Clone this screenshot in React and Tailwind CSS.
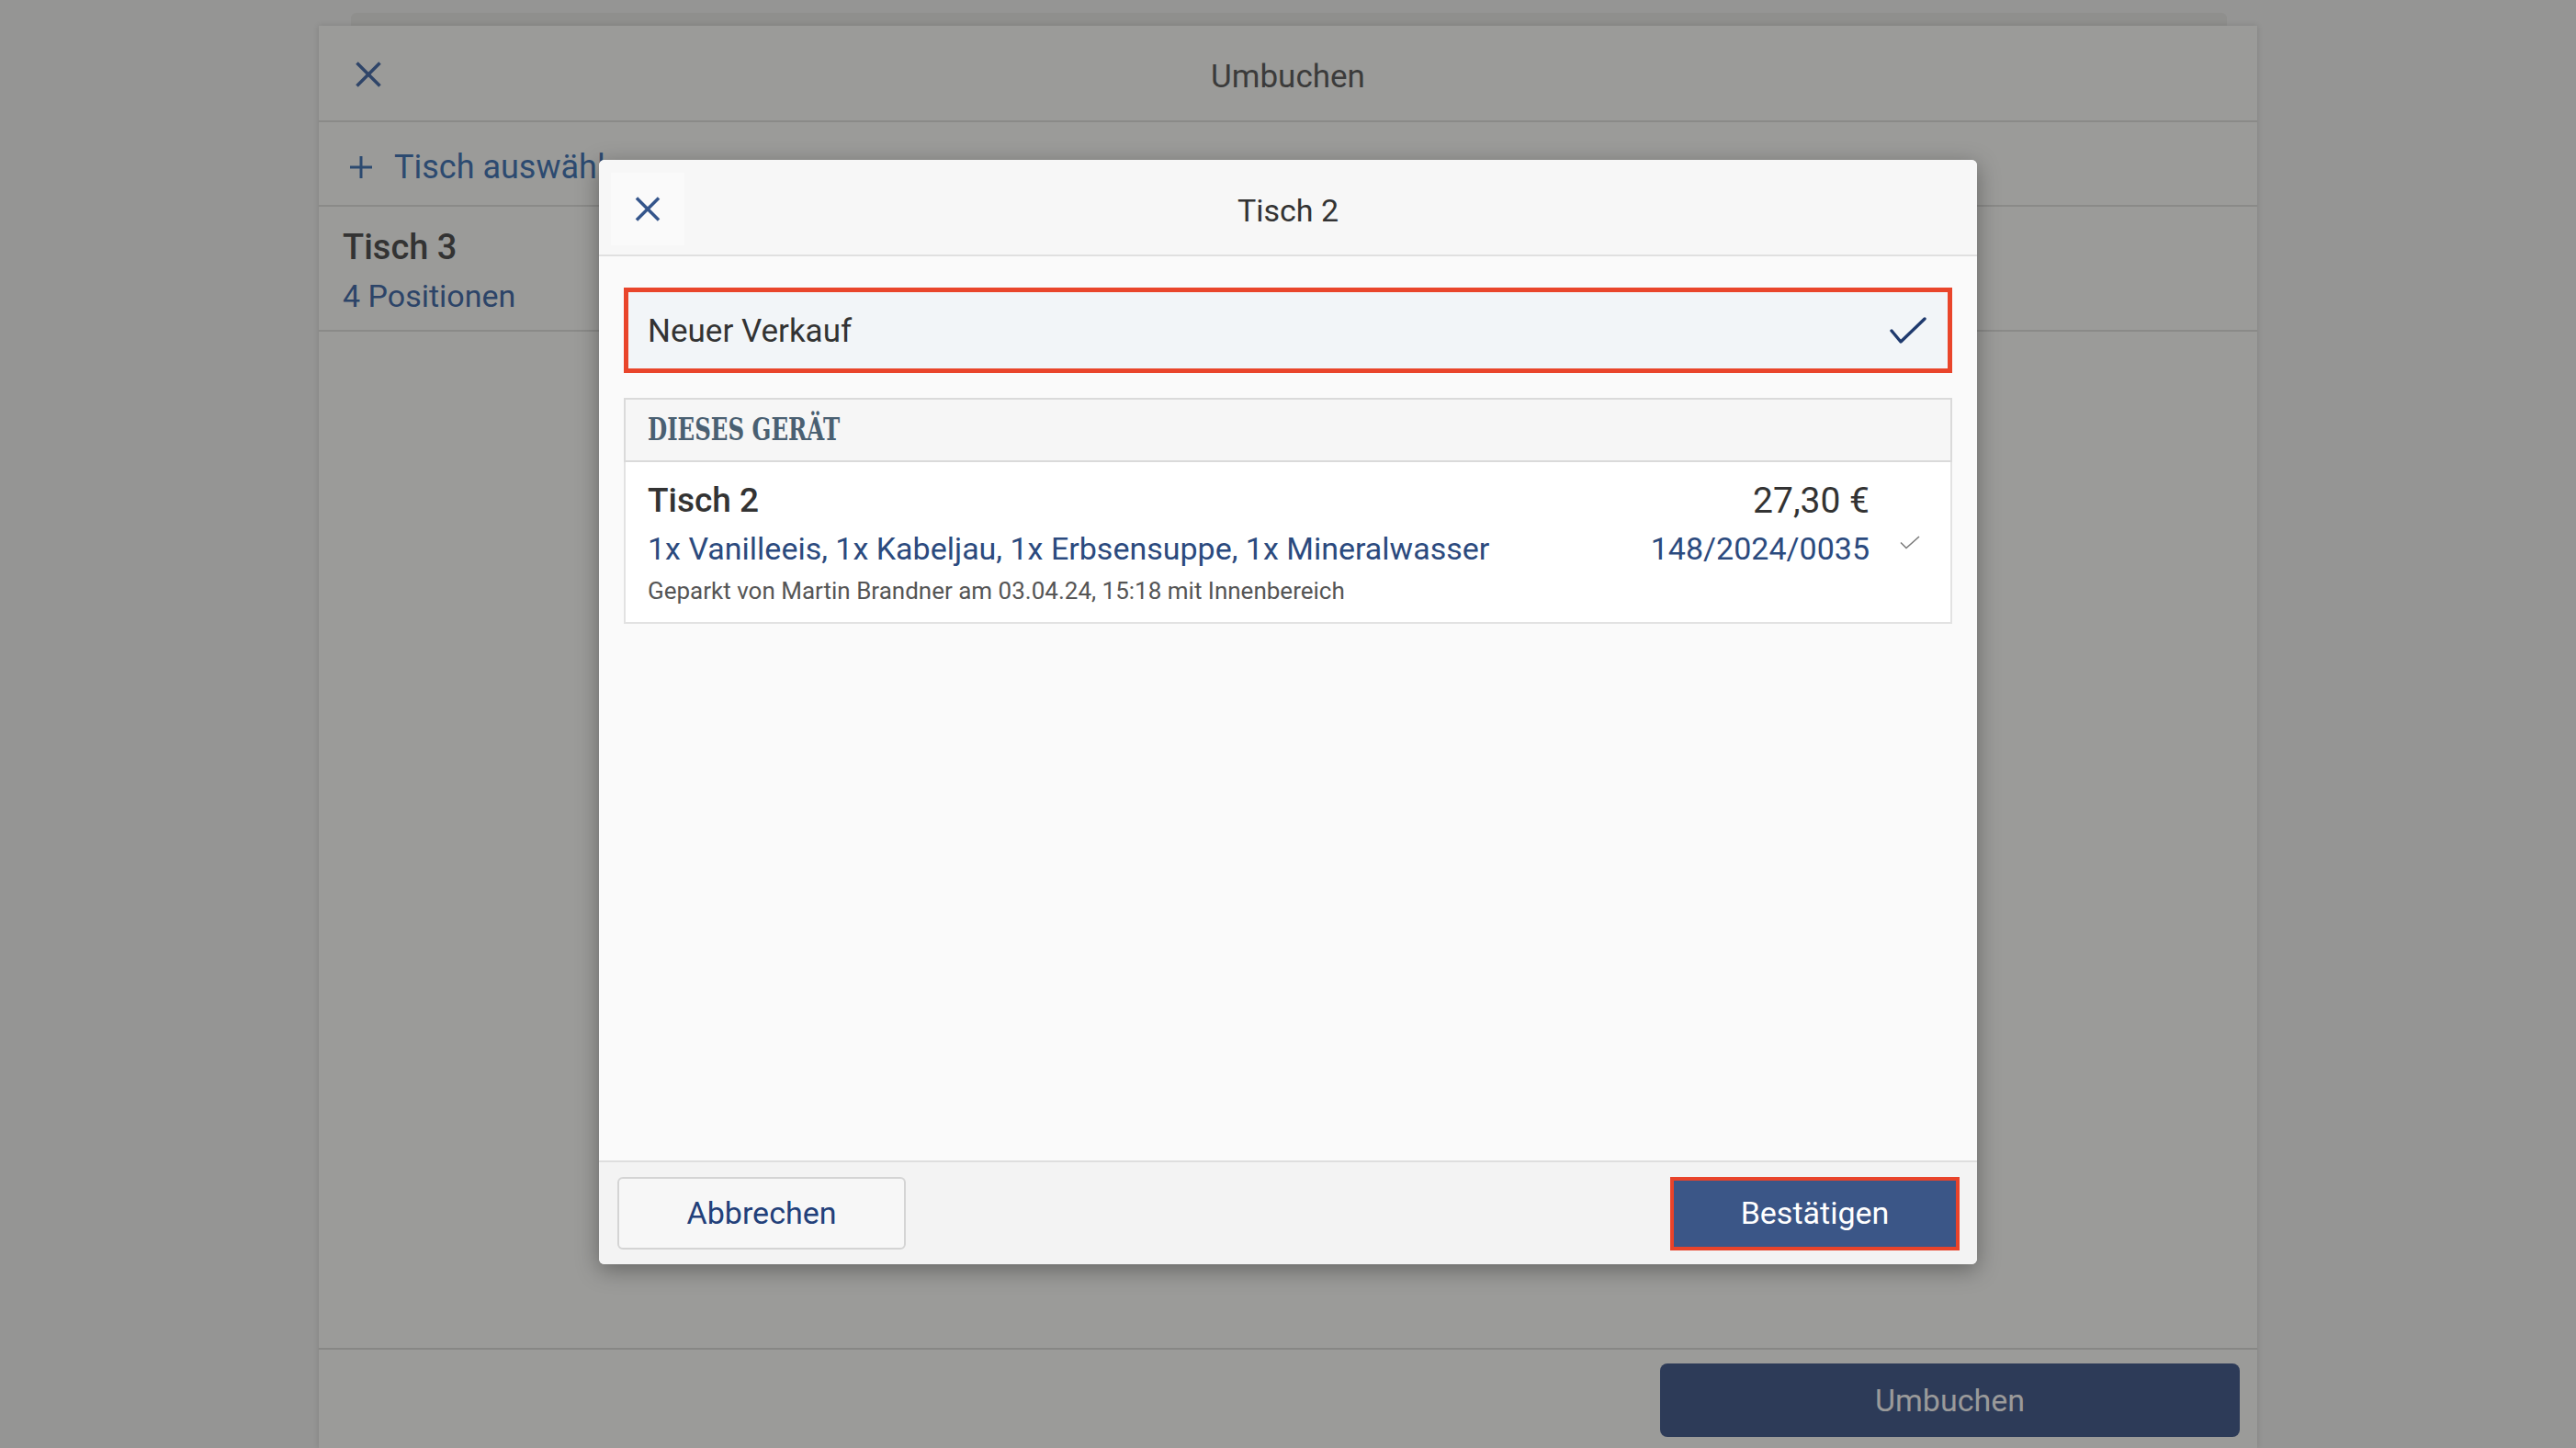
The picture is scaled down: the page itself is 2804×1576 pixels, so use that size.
import React from "react";

function XIcon({ className }) {
  return (
    <svg viewBox="0 0 28 28" className={className} fill="none" stroke="currentColor" strokeWidth="3.6" strokeLinecap="butt">
      <line x1="1.5" y1="1.5" x2="26.5" y2="26.5" />
      <line x1="26.5" y1="1.5" x2="1.5" y2="26.5" />
    </svg>
  );
}

export default function App() {
  return (
    <div
      className="relative h-[1576px] w-[2804px] overflow-hidden bg-[#959594]"
      style={{ fontFamily: "Roboto, 'Noto Sans', sans-serif" }}
    >
      {/* stacked sheet behind */}
      <div className="absolute left-[382px] top-[14px] h-[60px] w-[2042px] rounded-t-[6px] bg-[#8f8f8d]" />

      {/* outer panel */}
      <div className="flex justify-center pt-[28px]">
        <div className="relative flex h-[1548px] w-[2110px] flex-col bg-[#9b9b99] shadow-[0_0_6px_rgba(0,0,0,0.15)]">
          <div className="relative flex h-[105px] shrink-0 items-center justify-center border-b-2 border-[#8a8a88]">
            <div className="absolute left-[14px] top-[0px] flex h-[105px] w-[80px] items-center justify-center text-[#2f4569]">
              <XIcon className="h-[28px] w-[28px]" />
            </div>
            <span className="mt-[10px] text-[35px] text-[#3b3b3b]">Umbuchen</span>
          </div>
          <div className="flex h-[92px] shrink-0 items-center gap-[24px] border-b-2 border-[#8a8a88] pl-[34px] pt-[7px]">
            <svg viewBox="0 0 24 24" className="h-[24px] w-[24px] text-[#2c4a70]" fill="none" stroke="currentColor" strokeWidth="3">
              <line x1="12" y1="0" x2="12" y2="24" />
              <line x1="0" y1="12" x2="24" y2="12" />
            </svg>
            <span className="text-[36px] text-[#2c4a70]">Tisch auswählen</span>
          </div>
          <div className="flex h-[136px] shrink-0 flex-col justify-center border-b-2 border-[#8a8a88] pl-[26px] pt-[5px]">
            <span className="text-[38px] font-medium leading-[46px] text-[#333333]">Tisch 3</span>
            <span className="mt-[9px] text-[34px] leading-[42px] text-[#2c4468]">4 Positionen</span>
          </div>
          <div className="flex-1" />
          <div className="flex h-[109px] shrink-0 justify-end border-t-2 border-[#878785] pr-[19px] pt-[15px]">
            <div className="flex h-[80px] w-[631px] items-center justify-center rounded-[8px] bg-[#2d3b58]">
              <span className="text-[34px] text-[#9a9a9a]">Umbuchen</span>
            </div>
          </div>
        </div>
      </div>

      {/* modal dialog */}
      <div className="absolute left-[652px] top-[174px] flex h-[1202px] w-[1500px] flex-col overflow-hidden rounded-[6px] bg-[#fafafa] shadow-[0_6px_24px_rgba(0,0,0,0.35)]">
        <div className="relative flex h-[105px] shrink-0 items-center justify-center border-b-2 border-[#e0e0e0] bg-[#f7f7f7]">
          <div className="absolute left-[13px] top-[14px] flex h-[79px] w-[80px] items-center justify-center bg-[#fafafa] text-[#34558b]">
            <XIcon className="h-[27px] w-[28px]" />
          </div>
          <span className="mt-[7px] text-[34px] text-[#333333]">Tisch 2</span>
        </div>

        <div className="flex flex-1 flex-col px-[27px] pt-[34px]">
          <div className="flex h-[93px] items-center justify-between border-[5px] border-[#e9452b] bg-[#f2f5f8] pl-[21px] pr-[23px]">
            <span className="mt-[4px] text-[35px] text-[#333333]">Neuer Verkauf</span>
            <svg viewBox="0 0 40 30" className="h-[30px] w-[40px] text-[#1f3a6e]" fill="none" stroke="currentColor" strokeWidth="3.4" strokeLinecap="round" strokeLinejoin="round">
              <polyline points="2,15 12,27 38,2" />
            </svg>
          </div>

          <div className="mt-[27px] flex h-[70px] items-center overflow-hidden border-2 border-[#dadada] bg-[#f6f6f6] pl-[24px]">
            <span
              className="origin-left scale-x-[0.74] whitespace-nowrap text-[33px] font-bold text-[#4a6072]"
              style={{ fontFamily: "'DejaVu Serif', 'Liberation Serif', serif" }}
            >
              DIESES GERÄT
            </span>
          </div>

          <div className="flex h-[176px] border-2 border-t-0 border-[#e2e2e2] bg-white pl-[24px]">
            <div className="flex flex-1 flex-col pt-[20px]">
              <span className="text-[37px] font-medium leading-[44px] text-[#333333]">Tisch 2</span>
              <span className="mt-[9px] text-[34px] leading-[42px] text-[#2b4a7e]">
                1x Vanilleeis, 1x Kabeljau, 1x Erbsensuppe, 1x Mineralwasser
              </span>
              <span className="mt-[8px] text-[26px] leading-[34px] text-[#555555]">
                Geparkt von Martin Brandner am 03.04.24, 15:18 mit Innenbereich
              </span>
            </div>
            <div className="flex flex-col items-end pt-[20px]">
              <span className="text-[39px] leading-[44px] text-[#333333]">27,30 €</span>
              <span className="mt-[9px] text-[34px] leading-[42px] text-[#2b4a7e]">148/2024/0035</span>
            </div>
            <div className="flex w-[88px] justify-center pt-[80px]">
              <svg viewBox="0 0 22 15" className="h-[15px] w-[22px] text-[#7a7a7a]" fill="none" stroke="currentColor" strokeWidth="1.6">
                <polyline points="1,7.5 7,13.5 21,1" />
              </svg>
            </div>
          </div>
        </div>

        <div className="flex h-[113px] shrink-0 items-center justify-between border-t-2 border-[#dedede] bg-[#f3f3f3] pl-[20px] pr-[19px]">
          <div className="flex h-[79px] w-[314px] items-center justify-center rounded-[6px] border-2 border-[#d4d4d4] bg-[#f7f7f7]">
            <span className="text-[34px] text-[#22407a]">Abbrechen</span>
          </div>
          <div className="flex h-[80px] w-[315px] items-center justify-center border-[4px] border-[#e8432a] bg-[#3b5687]">
            <span className="text-[34px] text-white">Bestätigen</span>
          </div>
        </div>
      </div>
    </div>
  );
}
